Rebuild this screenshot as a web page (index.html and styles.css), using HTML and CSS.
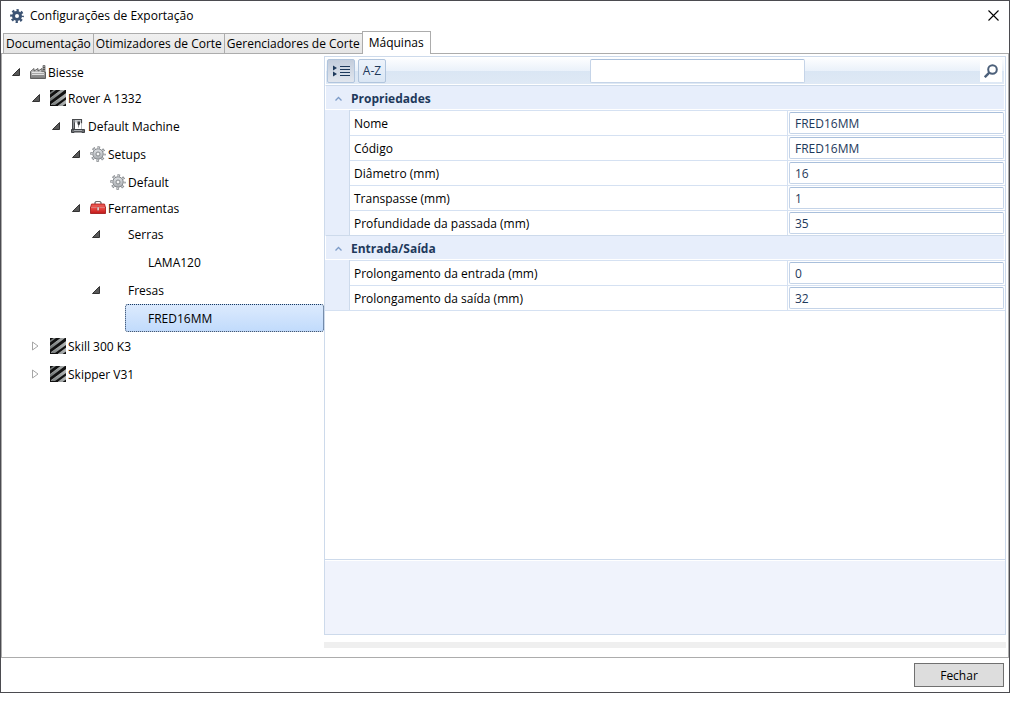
FILE: index.html
```html
<!DOCTYPE html>
<html lang="pt-BR">
<head>
<meta charset="utf-8">
<title>Configurações de Exportação</title>
<link rel="stylesheet" href="styles.css">
</head>
<body>
<svg class="sprites" aria-hidden="true">
  <defs>
    <linearGradient id="steel" x1="0" y1="0" x2="0" y2="1"><stop offset="0" stop-color="#dfe2e5"/><stop offset="1" stop-color="#a9adb1"/></linearGradient>
    <linearGradient id="red" x1="0" y1="0" x2="0" y2="1"><stop offset="0" stop-color="#f0504a"/><stop offset="1" stop-color="#c01818"/></linearGradient>
    <linearGradient id="wall" x1="0" y1="0" x2="0" y2="1"><stop offset="0" stop-color="#d8d8d8"/><stop offset="1" stop-color="#777"/></linearGradient>
    <linearGradient id="metal" x1="0" y1="0" x2="1" y2="0"><stop offset="0" stop-color="#6d7272"/><stop offset="1" stop-color="#b4b8b8"/></linearGradient>
  </defs>
  <symbol id="open" viewBox="0 0 8 8"><path d="M7.500 .5v7h-7z" fill="#595959" stroke="#333"/></symbol>
  <symbol id="closed" viewBox="0 0 8 10"><path d="M.5 1v8L6 5z" fill="#fff" stroke="#a6a6a6"/></symbol>
  <symbol id="factory" viewBox="0 0 16 16">
    <path d="M13 1.500h2v12h-2z" fill="#aaa" stroke="#666" stroke-width=".8"/>
    <path d="M13 3.500h2M13 5.500h2" stroke="#555"/>
    <path d="M.5 14.500V7.500l3.500-3v2.500l4-2.500v2.500l4-2.500V8h3.500v6.500z" fill="url(#wall)" stroke="#555" stroke-width=".9"/>
    <path d="M2 8.500h12M2 10.500h12" stroke="#f1f1f1" stroke-width=".8"/>
    <path d="M2 11.500h12" stroke="#8b8b8b"/>
  </symbol>
  <symbol id="stripes" viewBox="0 0 16 16">
    <path d="M0 0h16v16H0z" fill="#111"/>
    <path d="M0 2.500L3.500 0H6L0 4.500zM0 8.500L11 0h4L0 11.500zM1 14.500L16 3.500V7L5 15H1zM8 16l8-6v3.500L12.500 16z" fill="url(#metal)"/>
    <path d="M0 8.500L11 0M1 14.500l15-11M8 16l8-6" stroke="#c8cbcb" stroke-width=".6"/>
  </symbol>
  <symbol id="machine" viewBox="0 0 16 16">
    <path d="M2 1.500h10M11.500 1.500v4M3 1v10.500" fill="none" stroke="#46484b" stroke-width="1.200"/>
    <path d="M2.500 1.500h2V11h-2z" fill="#8d9196" stroke="#46484b"/>
    <path d="M4.500 2h6.500v2.500H4.500z" fill="#c4c7ca"/>
    <path d="M7.500 3.500H10v2.500l-1 1.500v2H8.500v-2l-1-1.500z" fill="#33363a"/>
    <path d="M11.500 5.500V11" stroke="#a9adb1" stroke-width=".8"/>
    <path d="M1.500 11.500h13v3h-2.500V14h-8v.5H1.500z" fill="#686b6f" stroke="#3e4145"/>
    <path d="M4 12.500h8" stroke="#a9adb1"/>
  </symbol>
  <symbol id="gear" viewBox="0 0 16 16">
    <circle cx="8" cy="8" r="6.500" fill="none" stroke="#7d8185" stroke-width="2.400" stroke-dasharray="2.600 2.505" stroke-dashoffset="1.300"/>
    <circle cx="8" cy="8" r="5.200" fill="url(#steel)" stroke="#85898d"/>
    <circle cx="8" cy="8" r="6.200" fill="none" stroke="#cdd0d3" stroke-width="1.600" stroke-dasharray="1.400 3.470" stroke-dashoffset=".7"/>
    <circle cx="8" cy="8" r="2" fill="#f4f5f5" stroke="#85898d"/>
  </symbol>
  <symbol id="toolbox" viewBox="0 0 16 16">
    <path d="M5 4V2.500l1-1h4l1 1V4" fill="none" stroke="#6d6d6d" stroke-width="1.200"/>
    <path d="M1.500 4h13l1 3.500H.5z" fill="#e9544e" stroke="#a81616" stroke-width=".8"/>
    <path d="M.5 7.500h15v6H.5z" fill="url(#red)" stroke="#9c1010" stroke-width=".8"/>
    <path d="M1 7.500h14" stroke="#f7a5a0" stroke-width=".7"/>
    <path d="M7.200 7H9v3.500H7.200z" fill="#f5f0ef" stroke="#8d3535" stroke-width=".4"/>
  </symbol>
</svg>

<main class="window">
  <header class="titlebar">
    <svg class="app-icon" viewBox="0 0 14 14" aria-hidden="true">
      <circle cx="7" cy="7" r="3.500" fill="none" stroke="#3c5373" stroke-width="3"/>
      <circle cx="7" cy="7" r="5.700" fill="none" stroke="#3c5373" stroke-width="2.400" stroke-dasharray="2.300 2.177" stroke-dashoffset="1.150"/>
    </svg>
    <h1 class="title">Configurações de Exportação</h1>
    <button class="close" aria-label="Fechar janela"><svg viewBox="0 0 11 11"><path d="M.5.5l10 10M10.500.5l-10 10" stroke="#000" stroke-width="1.100"/></svg></button>
  </header>

  <div class="tabs" role="tablist">
    <button class="tab" role="tab">Documentação</button>
    <button class="tab" role="tab">Otimizadores de Corte</button>
    <button class="tab" role="tab">Gerenciadores de Corte</button>
    <button class="tab tab-active" role="tab" aria-selected="true">Máquinas</button>
  </div>

  <section class="page">
    <ul class="tree">
      <li>
        <div class="node node-short"><button class="toggle" aria-label="Recolher"><svg class="arrow-open"><use href="#open"/></svg></button><span class="item"><svg class="icon"><use href="#factory"/></svg>Biesse</span></div>
        <ul>
          <li>
            <div class="node"><button class="toggle" aria-label="Recolher"><svg class="arrow-open"><use href="#open"/></svg></button><span class="item"><svg class="icon"><use href="#stripes"/></svg>Rover A 1332</span></div>
            <ul>
              <li>
                <div class="node"><button class="toggle" aria-label="Recolher"><svg class="arrow-open"><use href="#open"/></svg></button><span class="item"><svg class="icon"><use href="#machine"/></svg>Default Machine</span></div>
                <ul>
                  <li>
                    <div class="node"><button class="toggle" aria-label="Recolher"><svg class="arrow-open"><use href="#open"/></svg></button><span class="item"><svg class="icon"><use href="#gear"/></svg>Setups</span></div>
                    <ul>
                      <li><div class="node"><span class="toggle"></span><span class="item"><svg class="icon"><use href="#gear"/></svg>Default</span></div></li>
                    </ul>
                  </li>
                  <li>
                    <div class="node node-short"><button class="toggle" aria-label="Recolher"><svg class="arrow-open"><use href="#open"/></svg></button><span class="item"><svg class="icon"><use href="#toolbox"/></svg>Ferramentas</span></div>
                    <ul>
                      <li>
                        <div class="node"><button class="toggle" aria-label="Recolher"><svg class="arrow-open"><use href="#open"/></svg></button><span class="item"><span class="icon"></span>Serras</span></div>
                        <ul>
                          <li><div class="node"><span class="toggle"></span><span class="item"><span class="icon"></span>LAMA120</span></div></li>
                        </ul>
                      </li>
                      <li>
                        <div class="node"><button class="toggle" aria-label="Recolher"><svg class="arrow-open"><use href="#open"/></svg></button><span class="item"><span class="icon"></span>Fresas</span></div>
                        <ul>
                          <li><div class="node"><span class="toggle"></span><span class="item item-selected"><span class="icon"></span>FRED16MM</span></div></li>
                        </ul>
                      </li>
                    </ul>
                  </li>
                </ul>
              </li>
            </ul>
          </li>
          <li><div class="node"><button class="toggle" aria-label="Expandir"><svg class="arrow-closed"><use href="#closed"/></svg></button><span class="item"><svg class="icon"><use href="#stripes"/></svg>Skill 300 K3</span></div></li>
          <li><div class="node"><button class="toggle" aria-label="Expandir"><svg class="arrow-closed"><use href="#closed"/></svg></button><span class="item"><svg class="icon"><use href="#stripes"/></svg>Skipper V31</span></div></li>
        </ul>
      </li>
    </ul>

    <div class="details">
      <div class="props">
        <div class="toolbar">
          <button class="tool tool-pressed" aria-label="Agrupar por categoria"><svg class="group-icon" viewBox="0 0 18 12"><path d="M1 .5l4 2.500-4 2.500zM1 6.500L5 9l-4 2.500z" fill="#1e395b"/><path d="M8 1.500h10M8 4.500h10M8 7.500h10M8 10.500h10" stroke="#1e395b"/></svg></button>
          <button class="tool">A-Z</button>
          <span class="space-before"></span>
          <input class="search" type="text" aria-label="Pesquisar propriedades">
          <span class="space-after"></span>
          <button class="find" aria-label="Pesquisar"><svg class="find-icon" viewBox="0 0 14 14"><circle cx="8.500" cy="5.500" r="4.300" fill="none" stroke="#4c607a" stroke-width="2"/><path d="M5.300 8.700L.8 13.200" stroke="#4c607a" stroke-width="2.400"/></svg></button>
        </div>

        <section class="category">
          <h2 class="category-title"><svg class="chevron" viewBox="0 0 7 5"><path d="M.5 4.500l3-3 3 3" fill="none" stroke="#7d9cc8" stroke-width="1.300"/></svg>Propriedades</h2>
          <div class="fields">
            <div class="field"><label for="nome">Nome</label><div class="value"><input id="nome" value="FRED16MM"></div></div>
            <div class="field"><label for="codigo">Código</label><div class="value"><input id="codigo" value="FRED16MM"></div></div>
            <div class="field"><label for="diametro">Diâmetro (mm)</label><div class="value"><input id="diametro" value="16"></div></div>
            <div class="field"><label for="transpasse">Transpasse (mm)</label><div class="value"><input id="transpasse" value="1"></div></div>
            <div class="field"><label for="profundidade">Profundidade da passada (mm)</label><div class="value"><input id="profundidade" value="35"></div></div>
          </div>
        </section>
        <section class="category">
          <h2 class="category-title"><svg class="chevron" viewBox="0 0 7 5"><path d="M.5 4.500l3-3 3 3" fill="none" stroke="#7d9cc8" stroke-width="1.300"/></svg>Entrada/Saída</h2>
          <div class="fields">
            <div class="field"><label for="entrada">Prolongamento da entrada (mm)</label><div class="value"><input id="entrada" value="0"></div></div>
            <div class="field"><label for="saida">Prolongamento da saída (mm)</label><div class="value"><input id="saida" value="32"></div></div>
          </div>
        </section>
        <div class="description"></div>
      </div>
      <div class="track"></div>
    </div>
  </section>

  <footer class="footer">
    <button class="dismiss">Fechar</button>
  </footer>
</main>
</body>
</html>
```
FILE: styles.css
```css
* { box-sizing: border-box; }

body {
  display: flex;
  height: 100vh;
  margin: 0;
  padding: 0 5px 8px 0;
  background: #fff;
  color: #000;
  font: 12px/16px "Open Sans", "Noto Sans", sans-serif;
}

button, input { font: inherit; color: inherit; }
button { padding: 0; border: 0; background: none; }
ul { margin: 0; padding: 0; list-style: none; }
svg { display: block; }
.sprites { position: absolute; width: 0; height: 0; }

.window {
  display: flex;
  flex: 1;
  flex-direction: column;
  min-width: 0;
  border: 1px solid #4b4b50;
}

.titlebar {
  display: flex;
  align-items: center;
  height: 30px;
  padding: 0 9px;
}
.app-icon { width: 14px; height: 14px; margin-right: 6px; }
.title { flex: 1; margin: 0; font-size: 12px; font-weight: 400; }
.close { padding: 0 1px 2px 0; }
.close svg { width: 11px; height: 11px; }

.tabs {
  display: flex;
  align-items: flex-end;
  height: 22px;
  padding-left: 2px;
}
.tab {
  height: 20px;
  margin-right: -1px;
  padding: 0 2px;
  border: 1px solid #acacac;
  border-bottom: 0;
  background: linear-gradient(#f0f0f0, #e5e5e5);
  white-space: nowrap;
}
.tab-active {
  z-index: 1;
  height: 23px;
  margin-bottom: -1px;
  padding: 0 6px;
  background: #fff;
}

.page {
  display: flex;
  flex: 1;
  min-height: 0;
  padding: 2px 2px 0 0;
  border: 1px solid #acacac;
}

.tree { width: 322px; padding-top: 4px; }
.tree ul { padding-left: 20px; }
.node { display: flex; align-items: center; height: 28px; }
.node-short { height: 24px; }
.toggle { display: flex; width: 23px; padding-left: 10px; }
.arrow-open { width: 8px; height: 8px; }
.arrow-closed { width: 8px; height: 10px; }
.item {
  display: flex;
  flex: 1;
  align-items: center;
  align-self: stretch;
  padding: 2px 0 0 4px;
  border: 1px solid transparent;
}
.item-selected {
  border: 1px dotted #1e395b;
  border-radius: 3px;
  background: linear-gradient(#dceafd, #c1dbfc);
}
.icon { width: 16px; height: 16px; margin: 0 2px 2px 0; }

.details { display: flex; flex: 1; flex-direction: column; min-width: 0; }
.props {
  display: flex;
  flex: 1;
  flex-direction: column;
  border: 1px solid #cddaeb;
  color: #1e395b;
}
.toolbar {
  display: flex;
  align-items: center;
  height: 28px;
  padding: 0 2px 0 1px;
  border: 1px solid #fff;
  background: linear-gradient(#fdfeff, #eaf1fa 50%, #dae6f4 50%, #dfe9f5);
}
.tool {
  display: flex;
  align-items: center;
  justify-content: center;
  width: 28px;
  height: 24px;
  margin-right: 3px;
  border: 1px solid #b1c5dd;
  border-radius: 2px;
  background: linear-gradient(#edf3fb, #dae6f4);
}
.tool-pressed { background: linear-gradient(#c3cddc, #e1e6ee); }
.group-icon { width: 18px; height: 12px; }
.space-before { flex: 8; }
.space-after { flex: 7; }
.search, .value input {
  border: 1px solid #c5d4e8;
  border-top-color: #a9bfdb;
  border-radius: 2px;
  background: #fff;
}
.search { width: 215px; height: 24px; }
.find {
  display: flex;
  align-items: center;
  justify-content: center;
  width: 22px;
  height: 22px;
  background: #fff;
}
.find-icon { width: 14px; height: 14px; }

.category { background: #e7eefb; }
.category-title {
  display: flex;
  align-items: center;
  height: 25px;
  margin: 0;
  padding: 2px 0 0 9px;
  border: 1px solid #fff;
  border-top-color: #cddaeb;
  font-size: 12px;
  font-weight: 700;
}
.chevron { width: 7px; height: 5px; margin-right: 9px; }
.fields {
  margin-left: 24px;
  border-left: 1px solid #cddaeb;
  background: #fff;
  color: #000;
}
.field {
  display: flex;
  align-items: center;
  height: 25px;
  border-top: 1px solid #d5e1f2;
}
.field label { flex: 1; padding: 2px 0 0 4px; }
.value { width: 218px; padding: 1px; border-left: 1px solid #d5e1f2; }
.value input {
  display: block;
  width: 100%;
  height: 22px;
  padding: 0 5px;
  color: #1e395b;
}
.category:nth-last-child(2) { border-bottom: 1px solid #d5e1f2; }
.description {
  height: 75px;
  margin-top: auto;
  border-top: 1px solid #cddaeb;
  background: #f0f3fc;
  box-shadow: inset 0 1px #fff;
}
.track {
  height: 6px;
  margin: 7px 0 9px;
  background: #efefef;
}

.footer {
  display: flex;
  align-items: center;
  justify-content: flex-end;
  height: 34px;
  padding-right: 5px;
}
.dismiss {
  width: 90px;
  height: 24px;
  padding-top: 2px;
  border: 1px solid #707070;
  background: #ddd;
}
```
